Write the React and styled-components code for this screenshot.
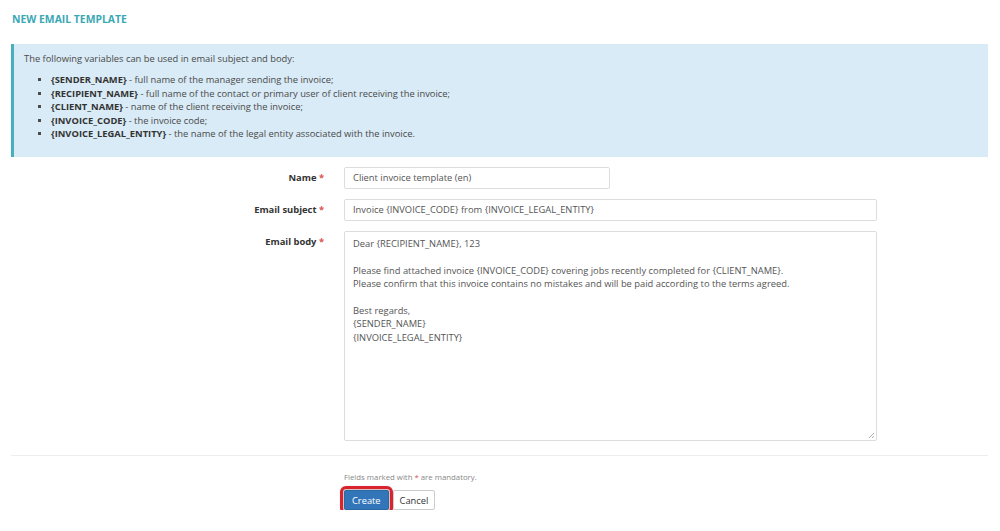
import React from "react";
import styled, { createGlobalStyle } from "styled-components";

const Global = createGlobalStyle`
  html, body { margin: 0; padding: 0; background: #fff; }
  body { font-family: "Open Sans", "Liberation Sans", sans-serif; color: #555; }
  * { box-sizing: border-box; }
`;

const Page = styled.div`
  padding: 12px 12px 0 11px;
  width: 1000px;
`;

const Title = styled.h1`
  margin: 0 0 0 1px;
  font-size: 10.4px;
  font-weight: 700;
  color: #3aa7b5;
  line-height: 14px;
  text-transform: uppercase;
`;

const Info = styled.div`
  margin-top: 18px;
  background: #d9ebf6;
  border-left: 3px solid #46b0bf;
  padding: 8px 10px 14px 10px;
  font-size: 9.35px;
  line-height: 13.4px;
  color: #4a4a4a;
  height: 113px;
`;

const Intro = styled.p`
  margin: 0 0 8px 0;
`;

const List = styled.ul`
  margin: 0;
  padding-left: 27px;
  list-style: square;
  li::marker { font-size: 8px; }
`;

const Var = styled.b`
  font-weight: 700;
  color: #333;
`;

const Form = styled.div`
  padding-top: 10px;
  display: flex;
  flex-direction: column;
  gap: 10px;
`;

const Row = styled.div`
  display: grid;
  grid-template-columns: 333px 1fr;
  align-items: start;
`;

const Label = styled.label`
  text-align: right;
  padding-right: 20px;
  font-size: 9.4px;
  font-weight: 700;
  color: #333;
  line-height: 22px;
  span { color: #d9534f; }
`;

const Input = styled.div`
  width: ${(p) => p.$w}px;
  height: 22px;
  border: 1px solid #ddd;
  border-radius: 2px;
  padding: 0 8px;
  font-size: 9.35px;
  line-height: 20px;
  color: #555;
  background: #fff;
`;

const Textarea = styled.div`
  position: relative;
  width: 533px;
  height: 210px;
  border: 1px solid #ddd;
  border-radius: 2px;
  padding: 5px 8px;
  font-size: 9.35px;
  line-height: 13.4px;
  color: #555;
  white-space: pre-wrap;
  background: #fff;
`;

const Grip = styled.svg`
  position: absolute;
  right: 1px;
  bottom: 1px;
`;

const Divider = styled.hr`
  border: 0;
  border-top: 1px solid #eee;
  margin: 14px 0 0 0;
`;

const Footer = styled.div`
  padding: 15px 0 0 333px;
`;

const Note = styled.div`
  font-size: 7.8px;
  color: #888;
  line-height: 12px;
`;

const Buttons = styled.div`
  display: flex;
  gap: 4px;
  margin-top: 7px;
`;

const Button = styled.button`
  height: 20px;
  padding: 0 ${(p) => (p.$primary ? 7 : 6)}px;
  font-family: inherit;
  font-size: 9.3px;
  border-radius: 2px;
  border: 1px solid ${(p) => (p.$primary ? "#2d6aa5" : "#ccc")};
  background: ${(p) => (p.$primary ? "#3276b9" : "#fff")};
  color: ${(p) => (p.$primary ? "#fff" : "#333")};
  outline: ${(p) => (p.$primary ? "3px solid #d9232d" : "none")};
  outline-offset: 1px;
  box-shadow: ${(p) => (p.$primary ? "0 0 3px 3px rgba(80,0,0,0.25)" : "none")};
`;

const body = `Dear {RECIPIENT_NAME}, 123

Please find attached invoice {INVOICE_CODE} covering jobs recently completed for {CLIENT_NAME}.
Please confirm that this invoice contains no mistakes and will be paid according to the terms agreed.

Best regards,
{SENDER_NAME}
{INVOICE_LEGAL_ENTITY}`;

const vars = [
  ["{SENDER_NAME}", "full name of the manager sending the invoice;"],
  ["{RECIPIENT_NAME}", "full name of the contact or primary user of client receiving the invoice;"],
  ["{CLIENT_NAME}", "name of the client receiving the invoice;"],
  ["{INVOICE_CODE}", "the invoice code;"],
  ["{INVOICE_LEGAL_ENTITY}", "the name of the legal entity associated with the invoice."],
];

export default function App() {
  return (
    <>
      <Global />
      <Page>
        <Title>New email template</Title>
        <Info>
          <Intro>The following variables can be used in email subject and body:</Intro>
          <List>
            {vars.map(([v, d]) => (
              <li key={v}>
                <Var>{v}</Var> - {d}
              </li>
            ))}
          </List>
        </Info>
        <Form>
          <Row>
            <Label>Name <span>*</span></Label>
            <Input $w={266}>Client invoice template (en)</Input>
          </Row>
          <Row>
            <Label>Email subject <span>*</span></Label>
            <Input $w={533}>Invoice {"{INVOICE_CODE}"} from {"{INVOICE_LEGAL_ENTITY}"}</Input>
          </Row>
          <Row>
            <Label>Email body <span>*</span></Label>
            <Textarea>
              {body}
              <Grip width="7" height="7" viewBox="0 0 7 7">
                <path d="M6 1L1 6M6 4L4 6" stroke="#999" strokeWidth="0.8" />
              </Grip>
            </Textarea>
          </Row>
        </Form>
        <Divider />
        <Footer>
          <Note>Fields marked with <span style={{ color: "#d9534f" }}>*</span> are mandatory.</Note>
          <Buttons>
            <Button $primary>Create</Button>
            <Button>Cancel</Button>
          </Buttons>
        </Footer>
      </Page>
    </>
  );
}
